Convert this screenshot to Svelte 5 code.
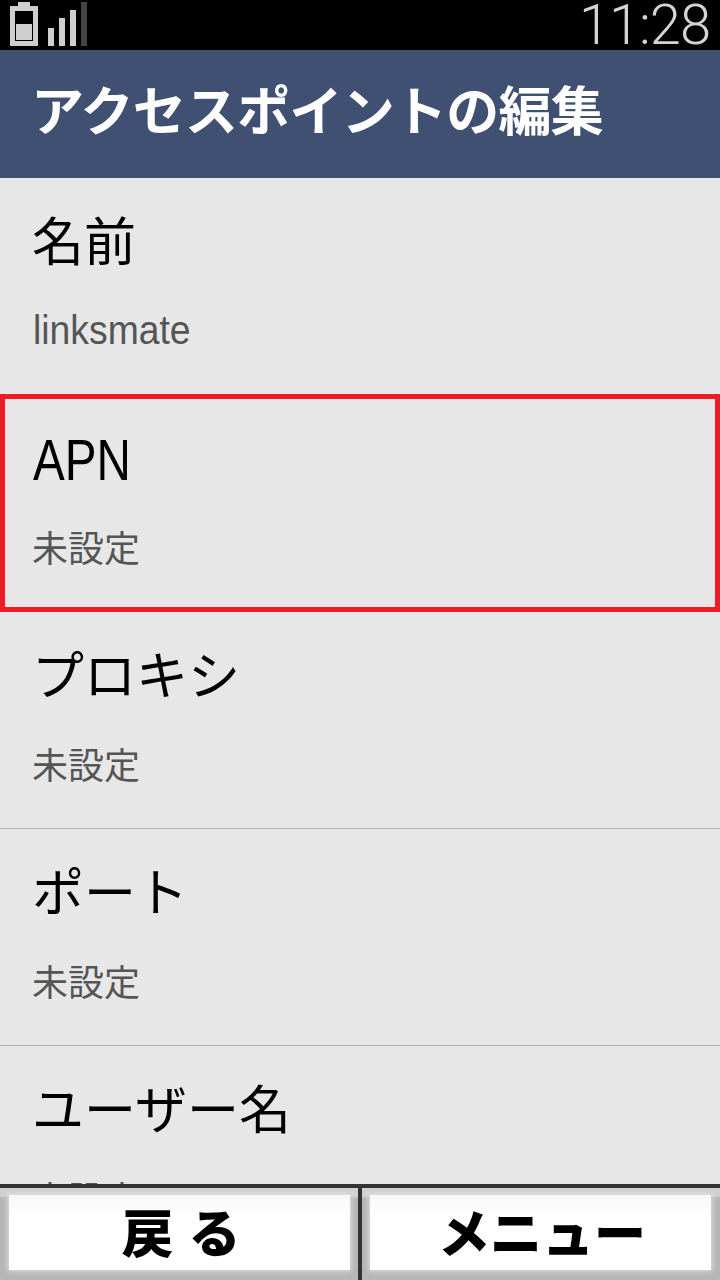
<script lang="ts">
  type Row = { label: string; value: string; latin?: boolean; latinValue?: boolean; selected?: boolean };
  const rows: Row[] = [
    { label: "名前", value: "linksmate", latinValue: true },
    { label: "APN", value: "未設定", latin: true, selected: true },
    { label: "プロキシ", value: "未設定" },
    { label: "ポート", value: "未設定" },
    { label: "ユーザー名", value: "未設定" },
  ];
</script>

<div class="screen">
  <div class="status">
    <svg class="icons" width="90" height="46" viewBox="0 0 90 46" aria-hidden="true">
      <rect x="18" y="2" width="12" height="4" fill="#cfcfcf" />
      <path d="M10 6H38V46H10ZM15 11V41H33V11Z" fill="#cfcfcf" fill-rule="evenodd" />
      <rect x="16" y="24" width="16" height="16" fill="#cfcfcf" />
      <rect x="48" y="28" width="6" height="18" fill="#cfcfcf" />
      <rect x="59" y="18" width="6" height="28" fill="#cfcfcf" />
      <rect x="70" y="10" width="6" height="36" fill="#cfcfcf" />
      <rect x="81" y="2" width="6" height="44" fill="#444" />
    </svg>
    <span class="clock">11:28</span>
  </div>

  <header class="title">アクセスポイントの編集</header>

  <div class="list">
    {#each rows as r}
      <div class="row" class:selected={r.selected}>
        <div class="label" class:latin={r.latin}>
          {#if r.latin}<span>{r.label}</span>{:else}{r.label}{/if}
        </div>
        <div class="value" class:latin={r.latinValue}>
          {#if r.latinValue}<span>{r.value}</span>{:else}{r.value}{/if}
        </div>
      </div>
    {/each}
  </div>

  <footer class="bar">
    <button class="btn"><span class="face back">戻 る</span></button>
    <button class="btn"><span class="face">メニュー</span></button>
  </footer>
</div>

<style>
  :global(body) {
    margin: 0;
    background: #e7e7e7;
  }
  .screen {
    width: 720px;
    height: 1280px;
    display: flex;
    flex-direction: column;
    overflow: hidden;
    font-family: "Noto Sans CJK JP", "Noto Sans", sans-serif;
  }
  .status {
    height: 50px;
    flex: none;
    background: #000;
    display: flex;
    align-items: flex-start;
    justify-content: space-between;
    padding-right: 10px;
    box-sizing: border-box;
  }
  .icons {
    display: block;
  }
  .clock {
    font-family: Roboto, sans-serif;
    font-weight: 300;
    font-size: 56px;
    line-height: 50px;
    letter-spacing: -1px;
    color: #d4d4d4;
  }
  .title {
    height: 128px;
    flex: none;
    box-sizing: border-box;
    background: #3f5072;
    color: #fff;
    font-size: 53px;
    font-weight: 700;
    line-height: 116px;
    padding-left: 31px;
    letter-spacing: -0.75px;
    white-space: nowrap;
  }
  .list {
    flex: 1;
    min-height: 0;
    overflow: hidden;
    background: #e7e7e7;
  }
  .row {
    height: 217px;
    box-sizing: border-box;
    padding: 30px 32px 0;
    border-bottom: 1px solid #b4b4b4;
  }
  .row.selected {
    margin-top: -1px;
    height: 218px;
    padding: 28px 27px 0;
    border: 5px solid #ef1c25;
  }
  .row.selected .value {
    margin-top: 32px;
  }
  .label {
    font-size: 52px;
    line-height: 62px;
    color: #000;
  }
  .label.latin span {
    display: inline-block;
    margin-left: 1px;
    font-family: "Liberation Sans", sans-serif;
    font-size: 58px;
    transform: scaleX(0.82);
    transform-origin: left center;
  }
  .value {
    margin-top: 36px;
    font-size: 36px;
    line-height: 46px;
    color: #555;
  }
  .value.latin {
    margin-top: 35px;
  }
  .value.latin span {
    display: inline-block;
    font-family: "Liberation Sans", sans-serif;
    font-size: 41px;
    transform: scaleX(0.91);
    transform-origin: left center;
    margin-left: 1px;
  }
  .bar {
    height: 96px;
    flex: none;
    box-sizing: border-box;
    display: grid;
    grid-template-columns: 358px 358px;
    gap: 4px;
    background: #333;
    padding-top: 4px;
  }
  .btn {
    display: flex;
    border: 0;
    margin: 0;
    padding: 7px 8px 10px;
    background: linear-gradient(#cfcfcf, #d2d2d2 8px, #b6b6b6 10px);
    font-family: inherit;
  }
  .btn:first-child {
    padding-left: 9px;
  }
  .btn:last-child {
    padding-right: 9px;
  }
  .face {
    flex: 1;
    background: linear-gradient(#f8f8f8, #fff 22px);
    box-shadow: 0 0 5px 1px #e2e2e2;
    font-size: 52px;
    font-weight: 900;
    color: #000;
    line-height: 71px;
    text-indent: 3px;
    text-align: center;
  }
  .face.back {
    word-spacing: 3px;
  }
</style>
